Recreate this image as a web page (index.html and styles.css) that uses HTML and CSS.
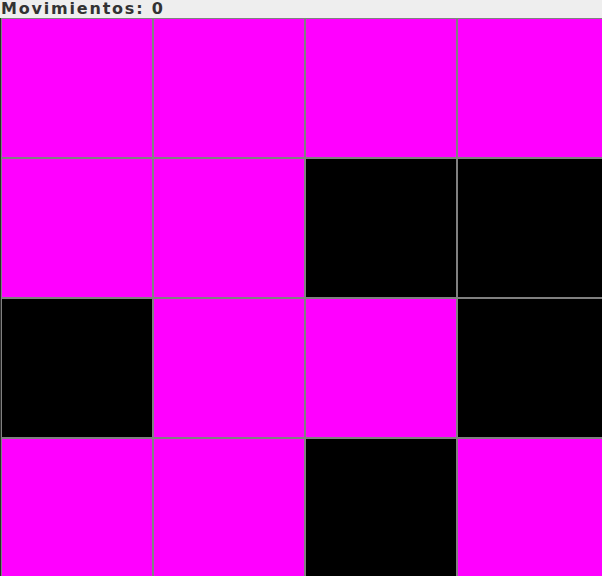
FILE: index.html
```html
<!DOCTYPE html>
<html>
<head>
<meta charset="utf-8">
<link rel="stylesheet" href="styles.css">
</head>
<body>
<div class="app">
  <div class="header"><span class="label">Movimientos: 0</span></div>
  <div class="board">
    <div class="cell on"></div><div class="cell on"></div><div class="cell on"></div><div class="cell on"></div>
    <div class="cell on"></div><div class="cell on"></div><div class="cell off"></div><div class="cell off"></div>
    <div class="cell off"></div><div class="cell on"></div><div class="cell on"></div><div class="cell off"></div>
    <div class="cell on"></div><div class="cell on"></div><div class="cell off"></div><div class="cell on"></div>
  </div>
</div>
</body>
</html>
```
FILE: styles.css
```css
html, body {
  margin: 0;
  padding: 0;
  background: #eeeeee;
  overflow: hidden;
}
.app {
  width: 602px;
  height: 576px;
  overflow: hidden;
}
.header {
  height: 18px;
  background: #eeeeee;
  display: flex;
  align-items: flex-start;
}
.label {
  font-family: "DejaVu Sans", sans-serif;
  font-weight: bold;
  font-size: 16px;
  letter-spacing: 1.8px;
  line-height: 17px;
  color: #333333;
  padding-left: 1px;
  -webkit-font-smoothing: none;
}
.board {
  display: grid;
  grid-template-columns: repeat(4, 152px);
  grid-template-rows: repeat(4, 140px);
  border-left: 1px solid #2a2a2a;
  width: max-content;
}
.cell {
  box-sizing: border-box;
  border: 1px solid #808080;
}
.on { background: #ff00ff; }
.off { background: #000000; }
```
